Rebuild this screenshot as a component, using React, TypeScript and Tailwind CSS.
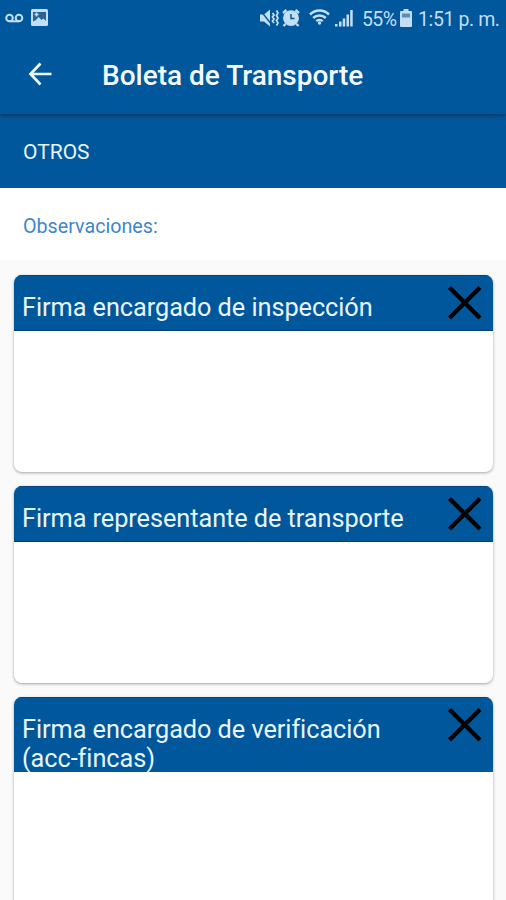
import React from 'react';

type Signature = { title: string; second?: string; tall?: boolean };

const signatures: Signature[] = [
  { title: 'Firma encargado de inspección' },
  { title: 'Firma representante de transporte' },
  { title: 'Firma encargado de verificación', second: '(acc-fincas)', tall: true },
];

const StatusBar: React.FC = () => (
  <div className="flex h-[37px] items-center justify-between pl-[5px] pr-[6px] text-[#c3def5]">
    <div className="flex items-center gap-[7px] pb-[2px]">
      <svg width="19" height="10" viewBox="0 0 19 10" fill="none" stroke="currentColor" strokeWidth="2">
        <circle cx="4.5" cy="5" r="3.3" />
        <circle cx="14" cy="5" r="3.3" />
        <path d="M4.5 8.3H14" />
      </svg>
      <svg width="17" height="17" viewBox="0 0 17 17">
        <rect width="17" height="17" rx="1.5" fill="currentColor" />
        <path d="M2 3h13v9l-2.500-2.500-2 1.500-3-3L5 11l-3 1.500z" fill="#2a6296" />
        <path d="M5.500 3.500v4M3.500 5.500h4" stroke="currentColor" strokeWidth="1.500" />
      </svg>
    </div>
    <div className="flex items-center">
      <svg className="-mt-[2px]" width="19" height="18" viewBox="0 0 19 18" fill="none" stroke="currentColor">
        <path d="M0 5.500h4l6-5v17l-6-5H0z" fill="currentColor" stroke="none" />
        <path d="M0 1l12 15" stroke="#01579b" strokeWidth="1.400" />
        <path d="M12.500 4l1.500 2-1.500 2 1.500 2-1.500 2 1.500 2M16.500 1.500L18 4l-1.500 2.500L18 9l-1.500 2.500L18 14l-1.500 2.500" strokeWidth="1.800" />
      </svg>
      <svg className="-mt-[2px] ml-[3px]" width="18" height="18" viewBox="0 0 18 18" fill="none">
        <circle cx="9" cy="9.200" r="7.900" fill="currentColor" />
        <path d="M1 4l3.500-3M17 4l-3.500-3M3.500 15l-2 2M14.500 15l2 2" stroke="currentColor" strokeWidth="2.400" />
        <path d="M9 5v4.500h3.500" stroke="#01579b" strokeWidth="1.500" />
      </svg>
      <svg className="-mt-[3px] ml-[9px]" width="21" height="16" viewBox="0 0 21 16" fill="none" stroke="currentColor" strokeWidth="2.500">
        <path d="M1 5.500a13.500 13.500 0 0 1 19 0M4.200 9a9 9 0 0 1 12.600 0M7.300 12.200a4.700 4.700 0 0 1 6.400 0" />
        <circle cx="10.500" cy="14" r="1.700" fill="currentColor" stroke="none" />
      </svg>
      <svg className="-mt-[1px] ml-[5px]" width="19" height="18" viewBox="0 0 19 18" fill="currentColor">
        <path d="M0 15h2.500v2.500H0zM4 12.500h2.500v5H4zM7.700 9.500h2.500v8H7.700zM11.500 5.500H14v12h-2.500zM15.200 1h2.500v16.500h-2.500z" />
      </svg>
      <span className="ml-[8px] w-[33px] whitespace-nowrap pt-[2px] text-[19.500px] leading-none tracking-[-0.6px]">55%</span>
      <svg className="-mt-[1px] ml-[5px]" width="12" height="18" viewBox="0 0 12 18">
        <path d="M3.500 0h5v2H11a1 1 0 0 1 1 1v14a1 1 0 0 1-1 1H1a1 1 0 0 1-1-1V3a1 1 0 0 1 1-1h2.500z" fill="currentColor" />
        <path d="M2 4.500h8v4H2z" fill="#5c8db8" />
      </svg>
      <span className="ml-[6px] w-[82px] whitespace-nowrap pt-[2px] text-[19.500px] leading-none tracking-[-0.4px]">1:51 p. m.</span>
    </div>
  </div>
);

const SignatureCard: React.FC<Signature> = ({ title, second, tall }) => (
  <section className={`shrink-0 overflow-hidden rounded-[8px] bg-white shadow-[0_1px_3px_rgba(0,0,0,0.35)] ${tall ? 'h-[230px]' : 'h-[197px]'}`}>
    <div
      className={`flex items-start justify-between border-t border-t-[#084482] bg-[#01579b] pl-[8px] pr-[10.5px] ${
        tall ? 'h-[75px]' : 'h-[56px] border-b border-b-[#083b7a]'
      }`}
    >
      <h2 className="whitespace-nowrap pt-[17px] text-[25.3px] leading-[29px] tracking-[-0.06px] text-[#e8f5fe]">
        {title}
        {second && <span className="block">{second}</span>}
      </h2>
      <button className="mt-[9px]" aria-label="Borrar">
        <svg width="36" height="36" viewBox="0 0 36 36" stroke="#000" strokeWidth="4.300" fill="none">
          <path d="M2.500 2.500l30.500 30.500M33 2.500L2.500 33" />
        </svg>
      </button>
    </div>
  </section>
);

const App: React.FC = () => (
  <div className="flex h-[900px] w-full flex-col overflow-hidden bg-[#fafafa] font-[Roboto,sans-serif]">
    <header className="relative z-10 h-[114px] shrink-0 bg-[#01579b] shadow-[0_1px_4px_rgba(0,0,0,0.5)]">
      <StatusBar />
      <div className="flex h-[76px] items-center pl-[28px]">
        <svg className="-mt-[2px]" width="24" height="24" viewBox="0 0 24 24" fill="none" stroke="#eef8ff" strokeWidth="2.700">
          <path d="M12.500 1.500L2.500 12l10 10.500M2 12h21.500" />
        </svg>
        <h1 className="ml-[50px] whitespace-nowrap pt-px text-[28px] font-medium leading-8 text-[#f2faff]">Boleta de Transporte</h1>
      </div>
    </header>

    <div className="flex h-[74px] shrink-0 items-center bg-[#01579b] pl-[23px] pt-[4px] text-[21px] text-[#e8f5fe]">OTROS</div>
    <div className="flex h-[72px] shrink-0 items-center bg-white pl-[23px] pt-[5px] text-[19.7px] text-[#3f86cb]">Observaciones:</div>

    <main className="flex flex-col gap-[14px] pl-[14px] pr-[13px] pt-[15px]">
      {signatures.map((s) => (
        <SignatureCard key={s.title} {...s} />
      ))}
    </main>
  </div>
);

export default App;
